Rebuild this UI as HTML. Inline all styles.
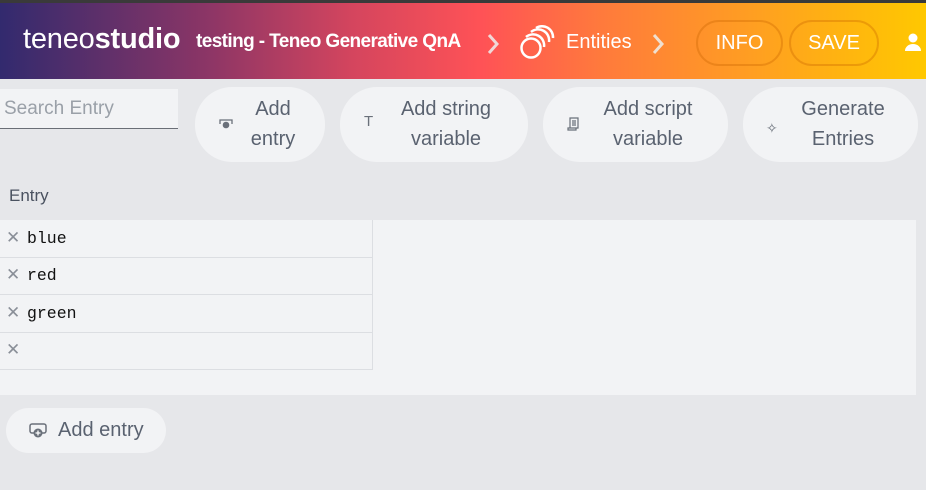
<!DOCTYPE html>
<html><head><meta charset="utf-8"><style>
*{box-sizing:border-box;margin:0;padding:0}
body{width:926px;height:490px;overflow:hidden;background:#e6e7ea;font-family:"Liberation Sans","DejaVu Sans",sans-serif;position:relative}
.top{position:absolute;left:0;top:0;width:926px;height:3px;background:#3a3a3a}
.hdr{position:absolute;left:0;top:3px;width:926px;height:76px;background:linear-gradient(90deg,#322a6e 0%,#8a3566 22%,#d4455e 38%,#ff5256 52%,#ff7a3c 65%,#ffa020 82%,#ffc800 100%);color:#fff}
.hdr .t{position:absolute;white-space:nowrap}
.pill{position:absolute;top:17px;height:46px;border:2px solid rgba(200,100,0,.35);border-radius:23px;color:#fff;font-size:20px;line-height:42px;text-align:center}
.btn{position:absolute;top:87px;height:75px;background:#f2f3f5;border-radius:37px;color:#5a6270;font-size:20px;line-height:30px;text-align:center}
.btn .ic{position:absolute;top:29px}
.btn .lb{position:absolute;top:7px}
.tbl{position:absolute;left:0;top:220px;width:916px;height:175px;background:#f2f3f5}
.row{position:absolute;left:0;width:373px;height:38px;border-right:1px solid #dcdee2;border-bottom:1px solid #dcdee2;font-family:"Liberation Mono","DejaVu Sans Mono",monospace;font-size:16.5px;color:#111}
.row .x{position:absolute;left:6px;top:8px;color:#8a8f98;font-family:"DejaVu Sans",sans-serif;font-size:17px}
.row .v{position:absolute;left:27px;top:9px}
</style></head><body>
<div class="top"></div>
<div class="hdr">
 <div class="t" style="left:23px;top:20px;font-size:29px;letter-spacing:-.2px"><span style="font-weight:300">teneo</span><b>studio</b></div>
 <div class="t" style="left:196px;top:28px;font-size:19px;font-weight:bold;letter-spacing:-.6px">testing - Teneo Generative QnA</div>
 <svg style="position:absolute;left:486px;top:30px" width="14" height="22" viewBox="0 0 14 22"><path d="M3 2l8 9-8 9" fill="none" stroke="#f0d8d8" stroke-width="3"/></svg>
 <svg style="position:absolute;left:516px;top:20px" width="40" height="40" viewBox="0 0 40 40"><circle cx="15" cy="25" r="9.5" fill="none" stroke="#fff" stroke-width="2.5"/><path d="M10 14a11 11 0 0 1 18 10" fill="none" stroke="#fff" stroke-width="2.5"/><path d="M15 9a11 11 0 0 1 18 10" fill="none" stroke="#fff" stroke-width="2.5"/><path d="M20 5a11 11 0 0 1 17 10" fill="none" stroke="#fff" stroke-width="2.5"/></svg>
 <div class="t" style="left:566px;top:28px;font-size:20px">Entities</div>
 <svg style="position:absolute;left:651px;top:30px" width="14" height="22" viewBox="0 0 14 22"><path d="M3 2l8 9-8 9" fill="none" stroke="#f0e0d0" stroke-width="3"/></svg>
 <div class="pill" style="left:696px;width:87px">INFO</div>
 <div class="pill" style="left:789px;width:90px">SAVE</div>
 <svg style="position:absolute;left:904px;top:30px" width="18" height="20" viewBox="0 0 18 20"><circle cx="9" cy="5" r="4.5" fill="#fff"/><path d="M1 18a8 7 0 0 1 16 0z" fill="#fff"/></svg>
</div>
<div style="position:absolute;left:0;top:89px;width:178px;height:40px;background:#f2f3f5;border-bottom:1px solid #6a6e76"></div>
<div style="position:absolute;left:4px;top:98px;font-size:19px;color:#9aa0a8">Search Entry</div>
<svg width="0" height="0" style="position:absolute"><defs><g id="ae"><path d="M1 6V2h12v4" fill="none" stroke="#6a707a" stroke-width="1.3"/><circle cx="7" cy="7" r="3.3" fill="#6a707a"/></g></defs></svg>
<div class="btn" style="left:195px;width:130px"><svg class="ic" style="left:24px;top:31px" width="14" height="12" viewBox="0 0 14 12"><use href="#ae"/></svg><div class="lb" style="left:48px;width:60px">Add<br>entry</div></div>
<div class="btn" style="left:340px;width:188px"><div class="ic" style="left:24px;top:27px;font-size:15px;color:#6a707a;line-height:16px">T</div><div class="lb" style="left:48px;width:116px">Add string<br>variable</div></div>
<div class="btn" style="left:543px;width:185px"><svg class="ic" style="left:24px;top:30px" width="12" height="14" viewBox="0 0 12 14"><path d="M3 1h8v10H3zM1 11h8v2H1zM5 4h4M5 6h4M5 8h4" fill="none" stroke="#6a707a" stroke-width="1.2"/></svg><div class="lb" style="left:48px;width:114px">Add script<br>variable</div></div>
<div class="btn" style="left:743px;width:175px"><div class="ic" style="left:23px;top:26px;font-size:14px;color:#6a707a">✧</div><div class="lb" style="left:50px;width:100px">Generate<br>Entries</div></div>
<div style="position:absolute;left:9px;top:186px;font-size:17px;color:#4a5260">Entry</div>
<div class="tbl">
 <div class="row" style="top:0"><span class="x">✕</span><span class="v">blue</span></div>
 <div class="row" style="top:37px"><span class="x">✕</span><span class="v">red</span></div>
 <div class="row" style="top:75px"><span class="x">✕</span><span class="v">green</span></div>
 <div class="row" style="top:112px"><span class="x">✕</span></div>
</div>
<div style="position:absolute;left:6px;top:408px;width:160px;height:45px;background:#f2f3f5;border-radius:23px">
 <svg style="position:absolute;left:23px;top:15px" width="18" height="16" viewBox="0 0 18 16"><rect x="1" y="1" width="16" height="9" rx="2" fill="none" stroke="#6a707a" stroke-width="1.5"/><circle cx="9" cy="10" r="4.5" fill="#6a707a"/><path d="M9 7.5v5M6.5 10h5" stroke="#fff" stroke-width="1.3"/></svg>
 <div style="position:absolute;left:52px;top:11px;font-size:20px;color:#5a6270">Add entry</div>
</div>
</body></html>
